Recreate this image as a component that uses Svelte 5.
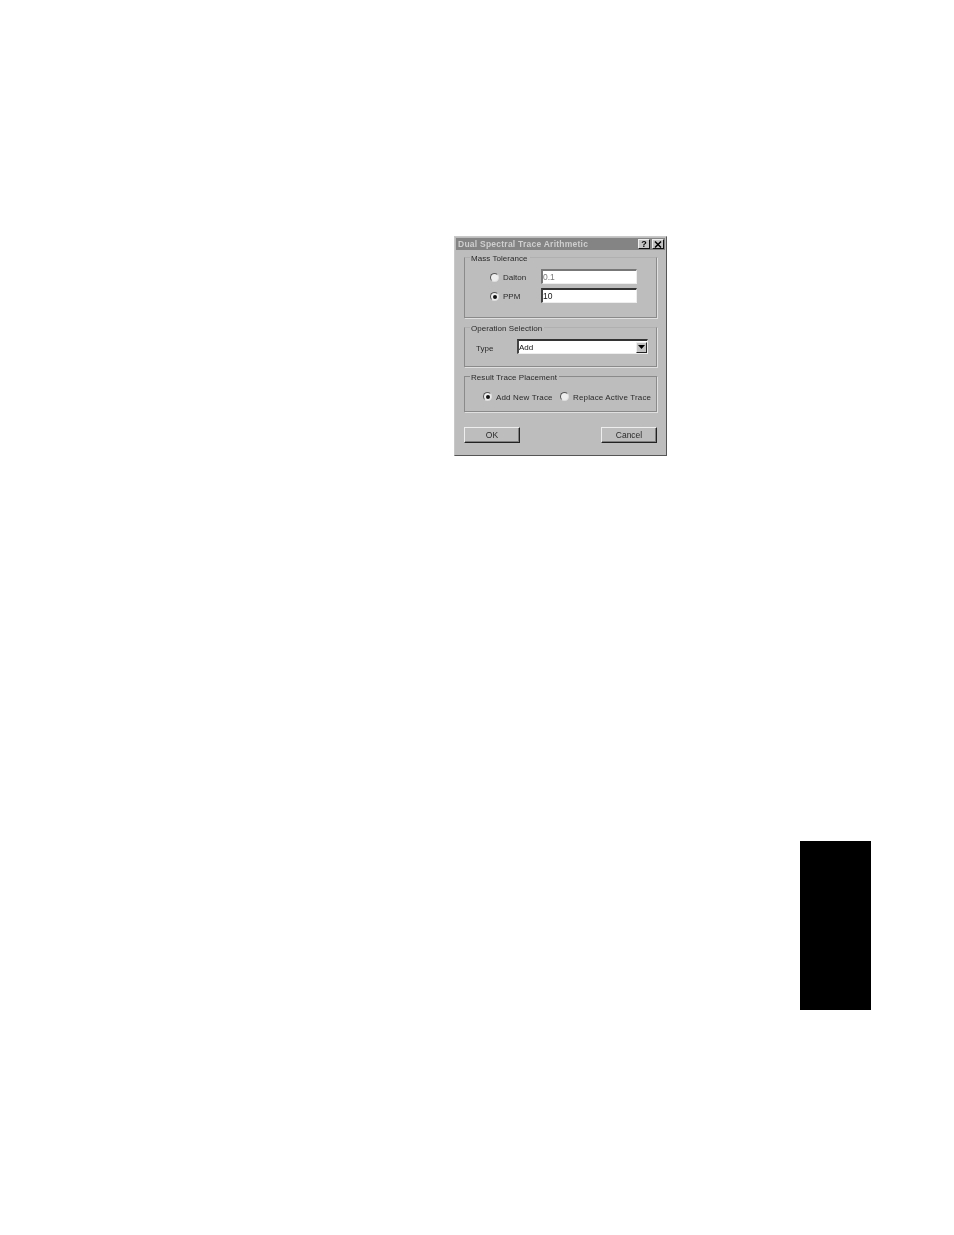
<script lang="ts">
	let tolerance = $state('ppm');
	let placement = $state('new');
	let dalton = $state('0.1');
	let ppm = $state('10');
</script>

<div class="page">
	<div class="dialog">
		<div class="titlebar">
			<span class="title">Dual Spectral Trace Arithmetic</span>
			<button class="cap help">?</button>
			<button class="cap close">
				<svg width="8" height="7" viewBox="0 0 8 7"><path d="M1 0.5 L7 6.5 M7 0.5 L1 6.5" stroke="#000" stroke-width="1.5" fill="none" /></svg>
			</button>
		</div>
		<div class="body">
			<div class="group g-mass">
				<span class="legend">Mass Tolerance</span>
				<div class="row r-dalton">
					<button class="radio" class:on={tolerance === 'dalton'} onclick={() => (tolerance = 'dalton')} aria-label="Dalton"></button>
					<span class="lbl">Dalton</span>
					<input class="field dim" bind:value={dalton} />
				</div>
				<div class="row r-ppm">
					<button class="radio" class:on={tolerance === 'ppm'} onclick={() => (tolerance = 'ppm')} aria-label="PPM"></button>
					<span class="lbl">PPM</span>
					<input class="field" bind:value={ppm} />
				</div>
			</div>

			<div class="group g-op">
				<span class="legend">Operation Selection</span>
				<div class="type-row">
					<span class="type-lbl">Type</span>
					<div class="select">
						<span>Add</span>
						<span class="arrow">
							<svg width="7" height="4" viewBox="0 0 7 4"><path d="M0 0 H7 L3.5 4 Z" fill="#000" /></svg>
						</span>
					</div>
				</div>
			</div>

			<div class="group g-result">
				<span class="legend">Result Trace Placement</span>
				<div class="place-row">
					<button class="radio" class:on={placement === 'new'} onclick={() => (placement = 'new')} aria-label="Add New Trace"></button>
					<span class="p1">Add New Trace</span>
					<button class="radio" class:on={placement === 'replace'} onclick={() => (placement = 'replace')} aria-label="Replace Active Trace"></button>
					<span>Replace Active Trace</span>
				</div>
			</div>

			<div class="buttons">
				<button class="btn">OK</button>
				<button class="btn">Cancel</button>
			</div>
		</div>
	</div>

	<div class="tab"></div>
</div>

<style>
	:global(body) {
		margin: 0;
		background: #fff;
	}

	.page {
		height: 1235px;
		box-sizing: border-box;
		padding-top: 236px;
		overflow: hidden;
		font-family: 'Liberation Sans', Arial, sans-serif;
	}

	.dialog {
		width: 213px;
		height: 220px;
		margin-left: 454px;
		box-sizing: border-box;
		background: #bdbdbd;
		border: 1px solid #555;
		border-top-color: #c8c8c8;
		border-left-color: #c8c8c8;
		padding: 1px;
		font-size: 8px;
		color: #2a2a2a;
		filter: blur(0.35px);
	}

	.titlebar {
		display: flex;
		align-items: center;
		height: 12px;
		background: #848484;
		padding: 0 1px 0 2px;
		gap: 1px;
	}

	.title {
		flex: 1;
		color: #cfcfcf;
		font-weight: bold;
		font-size: 8.5px;
		letter-spacing: 0.24px;
		white-space: nowrap;
	}

	.cap {
		width: 12px;
		height: 10px;
		padding: 0;
		display: flex;
		align-items: center;
		justify-content: center;
		background: #c4c4c4;
		border: 1px solid #111;
		border-top-color: #eee;
		border-left-color: #eee;
		font: bold 9px 'Liberation Sans', Arial, sans-serif;
		color: #000;
	}

	.help {
		margin-right: 1px;
	}

	.body {
		padding: 7px 8px 0 8px;
	}

	.group {
		position: relative;
		box-sizing: border-box;
		border: 1px solid #8a8a8a;
		box-shadow: 1px 1px 0 #e0e0e0;
	}

	.g-mass,
	.g-op {
		border-top-color: #b0b0b0;
	}

	.legend {
		position: absolute;
		top: -4px;
		left: 5px;
		padding: 0 2px 0 1px;
		background: #bdbdbd;
		line-height: 10px;
		letter-spacing: 0.05px;
		white-space: nowrap;
	}

	.g-mass {
		height: 61px;
	}

	.g-op {
		height: 40px;
		margin-top: 9px;
	}

	.g-result {
		height: 36px;
		margin-top: 9px;
	}

	.row {
		display: flex;
		align-items: center;
		height: 15px;
		padding-left: 25px;
	}

	.r-dalton {
		margin-top: 11px;
	}

	.r-ppm {
		margin-top: 4px;
	}

	.radio {
		width: 9px;
		height: 9px;
		padding: 0;
		margin-top: 2px;
		border-radius: 50%;
		box-sizing: border-box;
		background: #eee;
		border: 1px solid #555;
		border-right-color: #ddd;
		border-bottom-color: #ddd;
		flex: none;
		position: relative;
	}

	.radio.on::after {
		content: '';
		position: absolute;
		left: 1.5px;
		top: 1.5px;
		width: 4px;
		height: 4px;
		border-radius: 50%;
		background: #111;
	}

	.lbl {
		width: 42px;
		padding: 2px 0 0 4px;
		box-sizing: border-box;
	}

	.field {
		width: 96px;
		height: 15px;
		box-sizing: border-box;
		padding: 0;
		margin: 0;
		background: #fff;
		border: 1px solid #eee;
		border-top: 2px solid #333;
		border-left: 2px solid #444;
		outline: none;
		font: 8.5px 'Liberation Sans', Arial, sans-serif;
		color: #111;
	}

	.field.dim {
		color: #777;
		border-top-color: #777;
		border-left-color: #777;
	}

	.type-row {
		display: flex;
		align-items: center;
		padding: 11px 0 0 11px;
	}

	.type-lbl {
		width: 41px;
		padding-top: 3px;
	}

	.select {
		width: 131px;
		height: 15px;
		box-sizing: border-box;
		display: flex;
		align-items: center;
		justify-content: space-between;
		background: #fff;
		border: 1px solid #eee;
		border-top: 2px solid #333;
		border-left: 2px solid #444;
		color: #111;
	}

	.arrow {
		width: 11px;
		height: 11px;
		display: flex;
		align-items: center;
		justify-content: center;
		background: #c4c4c4;
		border: 1px solid #222;
		border-top-color: #eee;
		border-left-color: #eee;
		box-sizing: border-box;
	}

	.place-row {
		display: flex;
		align-items: center;
		padding: 14px 0 0 18px;
		white-space: nowrap;
		letter-spacing: 0.15px;
	}

	.place-row span {
		padding: 2px 0 0 4px;
	}

	.place-row .radio {
		margin-top: 0;
	}

	.p1 {
		width: 68px;
		flex: none;
		box-sizing: border-box;
	}

	.buttons {
		display: flex;
		justify-content: space-between;
		margin-top: 15px;
	}

	.btn {
		width: 56px;
		height: 16px;
		padding: 0;
		background: #bdbdbd;
		border: 1px solid #222;
		border-top-color: #eee;
		border-left-color: #eee;
		box-shadow: inset -1px -1px 0 #808080;
		font: 8.5px 'Liberation Sans', Arial, sans-serif;
		color: #2a2a2a;
	}

	.tab {
		width: 71px;
		height: 169px;
		margin: 385px 0 0 800px;
		background: #000;
	}
</style>
